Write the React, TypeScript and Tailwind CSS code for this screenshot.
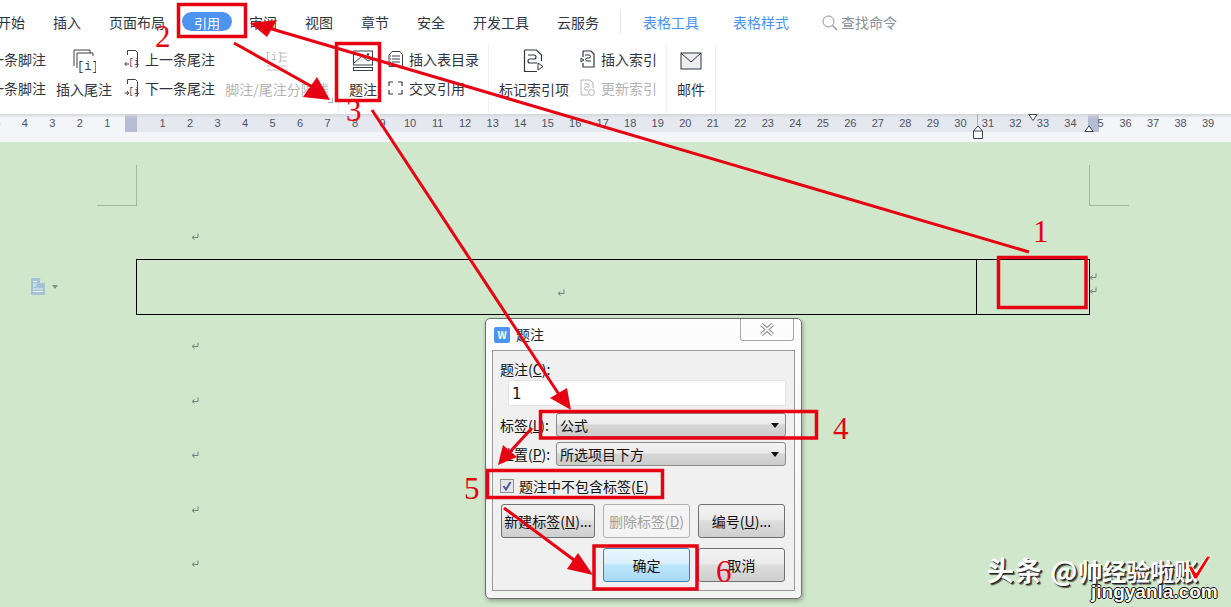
import React from "react";

const font = "font-['Noto_Sans_CJK_SC','Liberation_Sans',sans-serif]";

const tabs = ["开始", "插入", "页面布局", "引用", "审阅", "视图", "章节", "安全", "开发工具", "云服务"];
// ruler is 0 at x=135, one unit every 27.53px
const rulerCells = Array.from({ length: 45 }, (_, i) => i - 5);
const returnRows = [0, 1, 2, 3, 4];

const ReturnMark = () => (
  <svg width="8" height="8" viewBox="0 0 8 8" className="block shrink-0">
    <path d="M7 .5V4.5H2M3.5 2.5 1 4.5l2.500 2" fill="none" stroke="#77807a" strokeWidth="1" />
  </svg>
);

const FootIcon = ({ dir }: { dir: "up" | "down" }) => (
  <svg width="15" height="20" viewBox="0 0 15 20" className="shrink-0">
    <path d="M3.500 6V1.500h8l2 2V18h-2" fill="none" stroke="#3a3f4a" />
    <text x="4.500" y="16" fontSize="9" fill="#3a3f4a" fontFamily="Liberation Mono">[i]</text>
    {dir === "up" ? (
      <path d="M5 15H1M2.500 13 .8 15l1.700 2" fill="none" stroke="#3a3f4a" />
    ) : (
      <path d="M.5 15H4.500M3 13l1.700 2L3 17" fill="none" stroke="#3a3f4a" />
    )}
  </svg>
);

const BigCol = ({ width, label, gray, children }: { width: string; label: string; gray?: boolean; children: React.ReactNode }) => (
  <div className={`${width} flex flex-col items-center shrink-0`}>
    <div className="h-[22px] flex items-center justify-center">{children}</div>
    <div className={`mt-[8px] h-5 leading-5 whitespace-nowrap ${gray ? "text-[#b4b4b4]" : "text-[#2f3440]"}`}>{label}</div>
  </div>
);

const Sep = ({ className }: { className: string }) => <div className={`w-px h-[70px] -mt-[5px] bg-[#eef0f2] shrink-0 ${className}`} />;

const SmallRow = ({ icon, label, gray }: { icon: React.ReactNode; label: string; gray?: boolean }) => (
  <div className="flex items-center h-5 whitespace-nowrap">
    {icon}
    <span className={`ml-[6px] ${gray ? "text-[#b4b4b4]" : "text-[#2f3440]"}`}>{label}</span>
  </div>
);

const DropBox = ({ text }: { text: string }) => (
  <div className="w-[230px] h-6 rounded-[3px] border border-[#8a8a8a] bg-[linear-gradient(#f3f3f3_0,#ebebeb_45%,#d6d6d6_50%,#cdcdcd_100%)] flex items-center justify-between pl-[3px] pr-[6px] text-[14px] text-[#111] leading-none">
    <span>{text}</span>
    <span className="w-0 h-0 border-x-[4px] border-x-transparent border-t-[5px] border-t-[#111]" />
  </div>
);

const DlgButton = ({ children, disabled, primary, className }: { children: React.ReactNode; disabled?: boolean; primary?: boolean; className: string }) => (
  <div
    className={`h-[34px] rounded-[3px] border flex items-center justify-center text-[14px] whitespace-nowrap ${className} ${
      primary
        ? "border-[#3c7fb1] bg-[linear-gradient(#eaf6fd_0,#d9f0fc_45%,#bee6fd_50%,#a7d9f5_100%)] text-[#111]"
        : disabled
          ? "border-[#adb2b5] bg-[#f4f4f4] text-[#a0a0a0]"
          : "border-[#707070] bg-[linear-gradient(#f2f2f2_0,#ebebeb_45%,#dddddd_50%,#cfcfcf_100%)] text-[#111]"
    }`}
  >
    {children}
  </div>
);

const Annotations = () => (
  <svg width="1231" height="607" viewBox="0 0 1231 607" className="absolute left-0 top-0 pointer-events-none">
    <g fill="none" stroke="#e60012" strokeWidth="3.500">
      <rect x="178.500" y="4.500" width="67" height="32" />
      <rect x="336.500" y="43.500" width="43" height="57" />
      <rect x="998.500" y="257.500" width="87.500" height="50" />
      <rect x="540.500" y="411.500" width="276" height="26.500" />
      <rect x="487.500" y="470.500" width="175" height="27" />
      <rect x="594" y="546" width="103" height="43" />
    </g>
    <g stroke="#e60012" strokeWidth="3">
      <line x1="1029" y1="252" x2="265" y2="27" />
      <line x1="234" y1="43" x2="318" y2="90" />
      <line x1="372" y1="110" x2="560" y2="396" />
      <line x1="532" y1="428" x2="508" y2="454" />
      <line x1="504" y1="508" x2="578" y2="563" />
    </g>
    <g fill="#e60012">
      <polygon points="250,23 277,20 267,37" />
      <polygon points="330,100 317,77 303,97" />
      <polygon points="571,410 550,398 567,388" />
      <polygon points="498,465 503,445 517,457" />
      <polygon points="593,575 578,553 567,569" />
    </g>
  </svg>
);

const Num = ({ children, className }: { children: React.ReactNode; className: string }) => (
  <span className={`absolute font-['Liberation_Serif',serif] text-[31px] leading-none text-[#e60012] ${className}`}>{children}</span>
);

export default function App() {
  return (
    <div className={`relative w-[1231px] h-[607px] overflow-hidden bg-[#d0e7cb] ${font} text-[14px]`}>
      {/* tab row */}
      <div className="h-[42px] bg-white flex items-center pt-[3px] -ml-[3px] w-[1234px] text-[#2f3440]">
        <div className="flex items-center gap-7">
          {tabs.map((tab) =>
            tab === "引用" ? (
              <div key={tab} className="relative w-[28px] text-white text-[13px] text-center">
                <div className="absolute -left-[11px] -right-[11px] -top-px bottom-0 h-[19px] rounded-full bg-[#4d94f0]" />
                <span className="relative">{tab}</span>
              </div>
            ) : (
              <span key={tab} className="whitespace-nowrap">{tab}</span>
            ),
          )}
        </div>
        <div className="w-px h-[23px] bg-[#e4e6ea] ml-[21px]" />
        <span className="ml-[22px] text-[#4a92ee]">表格工具</span>
        <span className="ml-[34px] text-[#4a92ee]">表格样式</span>
        <svg width="16" height="16" viewBox="0 0 16 16" className="ml-[33px]">
          <circle cx="6.500" cy="6.500" r="5.500" fill="none" stroke="#8a909c" />
          <path d="M10.500 10.500 15 15" stroke="#8a909c" strokeWidth="1.300" />
        </svg>
        <span className="ml-[3px] text-[#8a8f99]">查找命令</span>
      </div>

      {/* ribbon */}
      <div className="h-[72px] bg-white pt-[7px] flex items-start -ml-[24px] w-[1255px] leading-5">
        <div className="w-[70px] shrink-0 flex flex-col gap-[9px] text-[#2f3440] whitespace-nowrap">
          <div className="h-5">上一条脚注</div>
          <div className="h-5">下一条脚注</div>
        </div>
        <BigCol width="w-14 ml-[10px]" label="插入尾注">
          <svg width="24" height="24" viewBox="0 0 24 24" className="mt-[2px]">
            <path d="M2 17V1h16v3M5 19V4h16v3" fill="none" stroke="#3a3f4a" />
            <text x="5" y="21" fontSize="12" fill="#3a3f4a" fontFamily="Liberation Mono">[i]</text>
          </svg>
        </BigCol>
        <div className="ml-3 w-[90px] shrink-0 flex flex-col gap-[9px]">
          <SmallRow icon={<FootIcon dir="up" />} label="上一条尾注" />
          <SmallRow icon={<FootIcon dir="down" />} label="下一条尾注" />
        </div>
        <div className="relative ml-[10px]">
          <BigCol width="w-[106px]" label="脚注/尾注分隔线" gray>
            <svg width="24" height="22" viewBox="0 0 24 22" className="mt-[2px]">
              <text x="0" y="10" fontSize="10" fill="#b4b4b4" fontFamily="Liberation Mono">[i]</text>
              <path d="M15 3h7M15 7h7M15 11h7M2 16h20M2 20h20" stroke="#c4c4c4" fill="none" />
            </svg>
          </BigCol>
          <div className="absolute left-[104px] top-[49px] w-[5px] h-[5px] border-r border-b border-[#a8a8a8]" />
        </div>
        <Sep className="ml-2" />
        <BigCol width="w-7 ml-[10px]" label="题注">
          <svg width="22" height="22" viewBox="0 0 22 22" className="mt-[2px]">
            <rect x="1.500" y="1" width="19" height="14" fill="none" stroke="#3a3f4a" />
            <path d="M2 13 10 6l6 5 4-2" fill="#e8e8e8" stroke="#3a3f4a" />
            <circle cx="16" cy="4.500" r="1.300" fill="#3a3f4a" />
            <rect x="1.500" y="17.500" width="19" height="3" fill="none" stroke="#3a3f4a" />
          </svg>
        </BigCol>
        <div className="ml-[11px] w-[92px] shrink-0 flex flex-col gap-[9px]">
          <SmallRow
            icon={
              <svg width="15" height="18" viewBox="0 0 15 18" className="shrink-0">
                <path d="M4 1.500h8l2.500 3v12H1V5z" fill="none" stroke="#3a3f4a" />
                <path d="M4 6h8M4 9h8M4 12h8M2 6h1M2 9h1M2 12h1" stroke="#3a3f4a" />
              </svg>
            }
            label="插入表目录"
          />
          <SmallRow
            icon={
              <svg width="15" height="14" viewBox="0 0 15 14" className="shrink-0">
                <path d="M1 5V1h4M10 1h4v4M14 9v4h-4M5 13H1V9" fill="none" stroke="#3a3f4a" strokeWidth="1.200" />
              </svg>
            }
            label="交叉引用"
          />
        </div>
        <Sep className="ml-2" />
        <BigCol width="w-[70px] ml-[10px]" label="标记索引项">
          <svg width="22" height="24" viewBox="0 0 22 24" className="mt-[2px]">
            <path d="M1.500 1h12l5 5v6M14 22.500H1.500V1" fill="none" stroke="#2f3440" strokeWidth="1.200" />
            <path d="M5 6h6a2 2 0 0 1 0 4H7a2 2 0 0 0 0 4h7" fill="none" stroke="#2f3440" strokeWidth="1.200" />
            <path d="M15 14v7l5-3.500z" fill="none" stroke="#2f3440" />
          </svg>
        </BigCol>
        <div className="ml-[11px] w-[77px] shrink-0 flex flex-col gap-[9px]">
          <SmallRow
            icon={
              <svg width="15" height="18" viewBox="0 0 15 18" className="shrink-0">
                <path d="M3 1h8l3 3v13H3v-4M3 7V1" fill="none" stroke="#2f3440" strokeWidth="1.200" />
                <path d="M5 5h4a1.500 1.500 0 0 1 0 3H7a1.500 1.500 0 0 0 0 3h4M1 8l3 2-3 2z" fill="none" stroke="#2f3440" />
              </svg>
            }
            label="插入索引"
          />
          <SmallRow
            gray
            icon={
              <svg width="15" height="18" viewBox="0 0 15 18" className="shrink-0">
                <path d="M1 1h9l3 3v5M8 16H1V1" fill="none" stroke="#b4b4b4" />
                <path d="M4 5h4a1.500 1.500 0 0 1 0 3H6a1.500 1.500 0 0 0 0 3h2" fill="none" stroke="#b4b4b4" />
                <circle cx="11.500" cy="13.500" r="3" fill="none" stroke="#b4b4b4" />
              </svg>
            }
            label="更新索引"
          />
        </div>
        <Sep className="ml-[9px]" />
        <BigCol width="w-7 ml-[10px]" label="邮件">
          <svg width="22" height="18" viewBox="0 0 22 18" className="mt-[2px]">
            <rect x="1" y="1" width="20" height="16" fill="#eeeeee" stroke="#2f3440" />
            <path d="M1 1 11 10 21 1" fill="none" stroke="#2f3440" />
          </svg>
        </BigCol>
        <Sep className="ml-[10px]" />
      </div>

      {/* ruler */}
      <div className="relative h-[18px] flex">
        <div className="w-[125px] bg-[#f4f5f8]" />
        <div className="w-3 bg-[#b6bdd2]" />
        <div className="w-[951px] bg-[#e5e8ef]" />
        <div className="w-[11px] bg-[#b6bdd2]" />
        <div className="flex-1 bg-[#f4f5f8]" />
        <div className="absolute left-0 right-0 top-0 h-[4px] bg-[linear-gradient(#d4d6da,#d4d6da00)]" />
        <div className="absolute left-[-16.4px] top-0 h-full flex font-['Liberation_Sans',sans-serif] text-[11px] text-[#4c5362] leading-[18px]">
          {rulerCells.map((n) => (
            <span key={n} className="w-[27.53px] text-center shrink-0">
              {n === 0 ? "" : n === 35 ? <span className="pl-[5px]">5</span> : Math.abs(n)}
            </span>
          ))}
        </div>
        {/* tab stop and indent markers */}
        <div className="absolute left-[977px] top-0 w-px h-[11px] bg-[#a9afbe]" />
        <svg width="10" height="14" viewBox="0 0 10 14" className="absolute left-[973px] top-[11px]">
          <path d="M.5 6 5 .8 9.500 6v7.500H.5z" fill="#fff" stroke="#3d4455" />
          <path d="M.5 6h9" stroke="#3d4455" />
        </svg>
        <svg width="10" height="8" viewBox="0 0 10 8" className="absolute left-[1028px] top-0">
          <path d="M.8.5h8.400L5 6.500z" fill="#fff" stroke="#3d4455" />
        </svg>
        <svg width="10" height="7" viewBox="0 0 10 7" className="absolute left-[1084px] top-[11px]">
          <path d="M.8 6.500h8.400L5 .8z" fill="#fff" stroke="#3d4455" />
        </svg>
      </div>
      <div className="h-[10px] bg-[#f4f5f8]" />

      {/* document page */}
      <div className="pt-[23px]">
        <div className="ml-[97px] w-[1032px] flex justify-between">
          <div className="w-10 h-[41px] border-r border-b border-[#a3b6a0]" />
          <div className="w-10 h-[41px] border-l border-b border-[#a3b6a0]" />
        </div>
        <div className="ml-[191px] mt-[27px]">
          <ReturnMark />
        </div>
        <div className="mt-[18px] ml-[31px] flex items-center">
          <svg width="14" height="17" viewBox="0 0 14 17" className="shrink-0 -mt-[1px]">
            <path d="M0 0h9l5 5v12H0z" fill="#a5c3d6" />
            <path d="M9 0v5h5" fill="#d0e7cb" />
            <path d="M2 3.500h4M2 6h4M2 8h3M2 11h10M2 13.500h10" stroke="#eaf3ee" />
          </svg>
          <span className="ml-[7px] w-0 h-0 border-x-[3px] border-x-transparent border-t-[4px] border-t-[#8b8f8b]" />
          <div className="ml-[78px] w-[954px] h-[56px] border-[1.5px] border-black flex shrink-0">
            <div className="w-[840px] border-r-[1.5px] border-black flex items-center justify-center pl-[8px] pt-[12px]">
              <ReturnMark />
            </div>
          </div>
          <div className="-ml-[1px] flex flex-col gap-[6px] -mt-[6px]">
            <ReturnMark />
            <ReturnMark />
          </div>
        </div>
        <div className="ml-[191px] mt-[27px] flex flex-col gap-[46.5px]">
          {returnRows.map((r) => (
            <ReturnMark key={r} />
          ))}
        </div>
      </div>

      {/* caption dialog */}
      <div className="absolute left-[485px] top-[318px] w-[317px] h-[281px] rounded-[5px] border border-[#6f6f6f] bg-[linear-gradient(#fdfdfd_0,#f4f4f4_100%)] shadow-[1px_2px_4px_#0000004d]">
        <div className="relative h-[31px] flex items-center pl-[8px]">
          <div className="w-4 h-4 rounded-[2px] bg-[#4d94f0] text-white text-[10px] font-bold leading-4 text-center">W</div>
          <span className="ml-[6px] text-[#222]">题注</span>
          <div className="absolute right-[7px] top-0 w-[54px] h-[22px] border border-t-0 border-[#a8a8a8] rounded-b-[3px] flex items-center justify-center">
            <svg width="16" height="13" viewBox="0 0 16 13">
              <path d="M2.500 1.500 13.500 11.500M13.500 1.500 2.500 11.500" stroke="#8a8f94" strokeWidth="4" />
              <path d="M2.500 1.500 13.500 11.500M13.500 1.500 2.500 11.500" stroke="#f4f4f4" strokeWidth="2" />
            </svg>
          </div>
        </div>
        <div className="mx-[6px] h-[241px] border border-[#9a9a9a] bg-[#f0f0f0] pl-[7px] text-[#111]">
          <div className="h-5 mt-[8px] leading-5">题注(<u>C</u>):</div>
          <div className="ml-2 mt-[1px] w-[278px] h-[26px] bg-white border border-[#e4e4e4] rounded-[2px] pl-[3px] font-['DejaVu_Sans',sans-serif] text-[15px] leading-[26px]">1</div>
          <div className="mt-[7px] flex items-center">
            <span className="w-14 shrink-0 whitespace-nowrap">标签(<u>L</u>):</span>
            <DropBox text="公式" />
          </div>
          <div className="mt-[5px] flex items-center">
            <span className="w-14 shrink-0 whitespace-nowrap">位置(<u>P</u>):</span>
            <DropBox text="所选项目下方" />
          </div>
          <div className="mt-[10px] h-5 flex items-center">
            <div className="w-[14px] h-[14px] border border-[#8e8f8f] bg-[#e6e6e6] flex items-center justify-center">
              <svg width="10" height="10" viewBox="0 0 10 10">
                <path d="M1.500 5 4 8.500 8.500 1" fill="none" stroke="#4a5a9c" strokeWidth="2" />
              </svg>
            </div>
            <span className="ml-[5px]">题注中不包含标签(<u>E</u>)</span>
          </div>
          <div className="mt-2 ml-px flex">
            <DlgButton className="w-[94px]">新建标签(<u>N</u>)...</DlgButton>
            <DlgButton className="w-[87px] ml-2" disabled>删除标签(<u>D</u>)</DlgButton>
            <DlgButton className="w-[87px] ml-2">编号(<u>U</u>)...</DlgButton>
          </div>
          <div className="mt-[10px] flex justify-end pr-[9px]">
            <DlgButton className="w-[87px]" primary>确定</DlgButton>
            <DlgButton className="w-[87px] ml-2">取消</DlgButton>
          </div>
        </div>
      </div>

      <Annotations />
      <Num className="left-[1033px] top-[216px]">1</Num>
      <Num className="left-[155px] top-[21px]">2</Num>
      <Num className="left-[346px] top-[95px]">3</Num>
      <Num className="left-[833px] top-[413px]">4</Num>
      <Num className="left-[464px] top-[473px]">5</Num>
      <Num className="left-[716px] top-[556px]">6</Num>

      {/* watermark */}
      <div className="absolute left-[987px] top-[552px] text-[27px] leading-[36px] font-bold text-white whitespace-nowrap [text-shadow:1px_1px_0_#222,2px_2px_1px_#555] tracking-[1px]">
        头条 @<span className="text-[24px] tracking-normal">帅经验啦账</span>
      </div>
      <div className="absolute left-[1091px] top-[582px] font-['Liberation_Sans',sans-serif] text-[19px] leading-[20px] font-bold text-white whitespace-nowrap [text-shadow:1px_0_0_#000,-1px_0_0_#000,0_1px_0_#000,0_-1px_0_#000]">
        jingyanla.com
      </div>
      <svg width="28" height="28" viewBox="0 0 28 28" className="absolute left-[1185px] top-[554px]">
        <path d="M3 12h4l4 7L22 2h4L12 25H9z" fill="#ff0000" stroke="#ffffff" strokeWidth="1" />
      </svg>
    </div>
  );
}
